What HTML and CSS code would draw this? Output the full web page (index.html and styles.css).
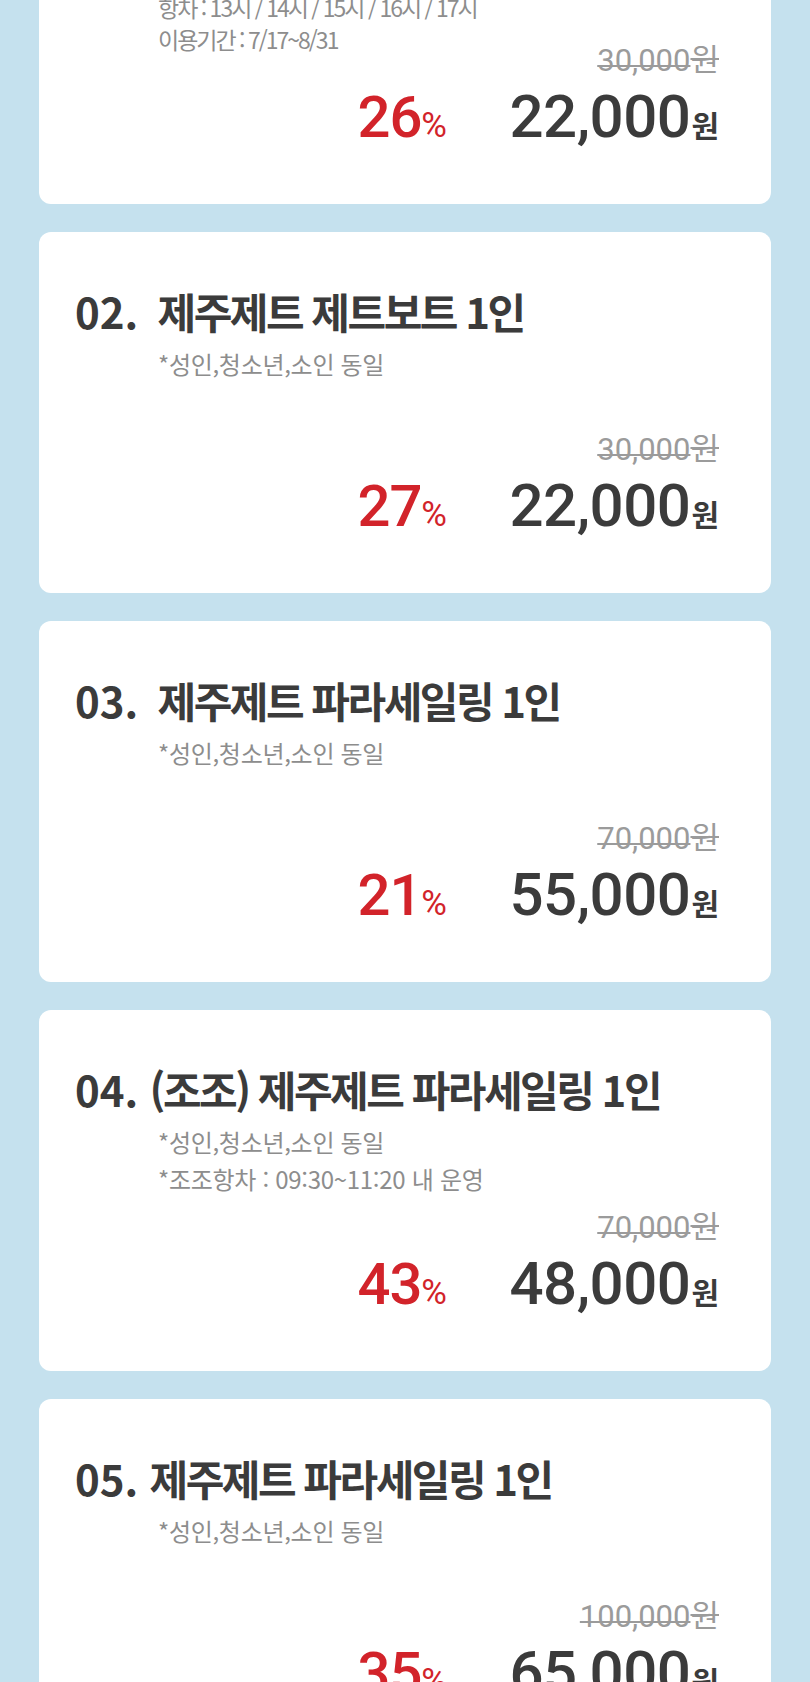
FILE: index.html
```html
<!DOCTYPE html>
<html lang="ko">
<head>
    <meta charset="UTF-8">
    <meta name="viewport" content="width=device-width, initial-scale=1.0">
    <title>제주제트 할인 상품</title>
    <link rel="stylesheet" href="styles.css">
</head>
<body>
    <div class="list">
        <div class="item item-first">
            <div class="info info-tight">
                <p>항차 : 13시 / 14시 / 15시 / 16시 / 17시</p>
                <p>이용기간 : 7/17~8/31</p>
            </div>
            <div class="prices">
                <div class="old"><span class="num">30,000</span>원</div>
                <div class="row">
                    <div class="rate"><span class="num">26</span><small>%</small></div>
                    <div class="price"><span class="num">22,000</span><small>원</small></div>
                </div>
            </div>
        </div>

        <div class="item">
            <h2 class="title"><span class="no no-wide">02.</span> 제주제트 제트보트 1인</h2>
            <div class="info">
                <p>*성인,청소년,소인 동일</p>
            </div>
            <div class="prices">
                <div class="old"><span class="num">30,000</span>원</div>
                <div class="row">
                    <div class="rate"><span class="num">27</span><small>%</small></div>
                    <div class="price"><span class="num">22,000</span><small>원</small></div>
                </div>
            </div>
        </div>

        <div class="item">
            <h2 class="title"><span class="no no-wide">03.</span> 제주제트 파라세일링 1인</h2>
            <div class="info">
                <p>*성인,청소년,소인 동일</p>
            </div>
            <div class="prices">
                <div class="old"><span class="num">70,000</span>원</div>
                <div class="row">
                    <div class="rate"><span class="num">21</span><small>%</small></div>
                    <div class="price"><span class="num">55,000</span><small>원</small></div>
                </div>
            </div>
        </div>

        <div class="item">
            <h2 class="title"><span class="no">04.</span> (조조) 제주제트 파라세일링 1인</h2>
            <div class="info">
                <p>*성인,청소년,소인 동일</p>
                <p>*조조항차 : 09:30~11:20 내 운영</p>
            </div>
            <div class="prices">
                <div class="old"><span class="num">70,000</span>원</div>
                <div class="row">
                    <div class="rate"><span class="num">43</span><small>%</small></div>
                    <div class="price"><span class="num">48,000</span><small>원</small></div>
                </div>
            </div>
        </div>

        <div class="item">
            <h2 class="title"><span class="no">05.</span> 제주제트 파라세일링 1인</h2>
            <div class="info">
                <p>*성인,청소년,소인 동일</p>
            </div>
            <div class="prices">
                <div class="old"><span class="num">100,000</span>원</div>
                <div class="row">
                    <div class="rate"><span class="num">35</span><small>%</small></div>
                    <div class="price"><span class="num">65,000</span><small>원</small></div>
                </div>
            </div>
        </div>
    </div>
</body>
</html>
```

FILE: styles.css
```css
body {
    margin: 0;
    background-color: #c5e1ee;
    font-family: "Noto Sans CJK KR", "Noto Sans", sans-serif;
    color: #3b3b3b;
    overflow: hidden;
}
.list {
    display: flex;
    flex-direction: column;
    gap: 28px;
    padding: 0 39px;
}
.item {
    display: flex;
    flex-direction: column;
    height: 361px;
    box-sizing: border-box;
    padding: 55px 52px 46px 36px;
    background-color: #fff;
    border-radius: 12px;
}
.item-first {
    margin-top: -157px;
    padding-top: 148px;
}
.title {
    margin: 0;
    font-size: 42px;
    line-height: 48px;
    font-weight: 700;
    letter-spacing: -2.5px;
    color: #3b3b3b;
    white-space: nowrap;
}
.title .no {
    letter-spacing: 0;
    margin-right: 2px;
}
.title .no-wide {
    margin-right: 10px;
}
.info {
    margin: 10px 0 0 83px;
    color: #8d8d8d;
    font-size: 24px;
    line-height: 37px;
    letter-spacing: -0.3px;
}
.info p {
    margin: 0;
}
.info-tight {
    margin-top: 0;
    margin-bottom: -20px;
    font-size: 23px;
    line-height: 32px;
    letter-spacing: -2px;
}
.prices {
    margin-top: auto;
    text-align: right;
}
.num {
    font-family: Roboto, "Liberation Sans", sans-serif;
}
.old {
    font-size: 31px;
    line-height: 34px;
    color: #9b9b9b;
    text-decoration: line-through;
    text-decoration-thickness: 2px;
}
.row {
    display: flex;
    justify-content: flex-end;
    align-items: baseline;
    margin-top: 1px;
    line-height: 64px;
}
.rate {
    color: #d2232a;
    font-size: 58px;
    font-weight: 500;
    letter-spacing: -1px;
}
.rate small {
    font-family: Roboto, sans-serif;
    font-size: 35px;
    font-weight: 400;
    letter-spacing: 0;
}
.price {
    width: 272px;
    font-size: 60px;
    font-weight: 500;
    letter-spacing: -0.5px;
}
.price small {
    font-size: 30px;
    font-weight: 700;
    letter-spacing: 0;
    margin-left: 1px;
}
```
